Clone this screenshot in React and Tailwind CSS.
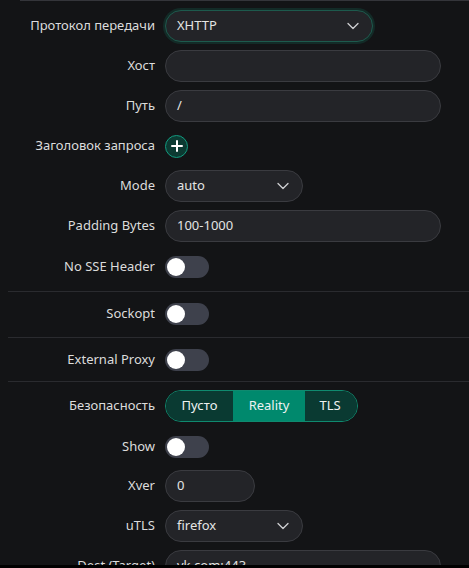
import React from "react";

// Transport / security settings form (dark theme)

const Chevron = () => (
  <svg width="12" height="8" viewBox="0 0 12 8" fill="none" className="shrink-0">
    <path d="M1 1.5 L6 6.5 L11 1.5" stroke="#cfd0d3" strokeWidth="1.3" strokeLinecap="round" strokeLinejoin="round" />
  </svg>
);

function Row({ label, className = "", children }) {
  return (
    <div className={`flex items-center h-8 ${className}`}>
      <div className="w-[155px] shrink-0 text-right text-[13px] text-[#dcdcdc] whitespace-nowrap">{label}</div>
      <div className="ml-[10px] flex items-center">{children}</div>
    </div>
  );
}

function Input({ value = "", width = "w-[276px]" }) {
  return (
    <div className={`${width} h-8 rounded-full border border-[#3a3b40] bg-[#232428] pl-[11px] flex items-center text-[13px] text-[#e4e4e4]`}>
      {value}
    </div>
  );
}

function Select({ value, width, focus }) {
  return (
    <div
      className={`${width} h-8 rounded-full border bg-[#232428] pl-[11px] pr-[13px] flex items-center justify-between text-[13px] text-[#e4e4e4] ${
        focus ? "border-[#1d5a4d] shadow-[0_0_0_2px_rgba(20,110,90,0.25)]" : "border-[#3a3b40]"
      }`}
    >
      <span>{value}</span>
      <Chevron />
    </div>
  );
}

function Switch() {
  return (
    <div className="w-[44px] h-[22px] rounded-full bg-[#3e414c] p-[2px] flex items-center">
      <div className="w-[18px] h-[18px] rounded-full bg-white" />
    </div>
  );
}

const Divider = ({ className = "" }) => <div className={`ml-2 h-px bg-[#2a2b2f] ${className}`} />;

export default function App() {
  return (
    <div className="w-[469px] h-[568px] bg-black" style={{ fontFamily: '"Noto Sans", "Open Sans", sans-serif' }}>
      <div className="h-[565px] overflow-hidden bg-[#131416]">
        <div className="ml-5 h-px bg-[#34353a]" />

        <Row label="Протокол передачи" className="mt-[9px]">
          <Select value="XHTTP" width="w-[208px]" focus />
        </Row>
        <Row label="Хост" className="mt-2">
          <Input />
        </Row>
        <Row label="Путь" className="mt-2">
          <Input value="/" />
        </Row>
        <Row label="Заголовок запроса" className="mt-2">
          <div className="w-[23px] h-[23px] rounded-full border border-[#139a7f] bg-[#0c3a32] flex items-center justify-center">
            <svg width="12" height="12" viewBox="0 0 12 12">
              <path d="M6 1 V11 M1 6 H11" stroke="#ffffff" strokeWidth="2" strokeLinecap="round" />
            </svg>
          </div>
        </Row>
        <Row label="Mode" className="mt-2">
          <Select value="auto" width="w-[138px]" />
        </Row>
        <Row label="Padding Bytes" className="mt-2">
          <Input value="100-1000" />
        </Row>
        <Row label="No SSE Header" className="mt-[9px]">
          <Switch />
        </Row>

        <Divider className="mt-2" />
        <Row label="Sockopt" className="mt-[6px]">
          <Switch />
        </Row>
        <Divider className="mt-[7px]" />
        <Row label="External Proxy" className="mt-[6px]">
          <Switch />
        </Row>
        <Divider className="mt-[5px]" />

        <Row label="Безопасность" className="mt-2">
          <div className="h-8 flex rounded-full border border-[#0f8a6f] overflow-hidden text-[13px] text-[#eef2f1]">
            <div className="w-[67px] bg-[#0a3a32] flex items-center justify-center">Пусто</div>
            <div className="w-[72px] bg-[#00896d] flex items-center justify-center">Reality</div>
            <div className="w-[52px] bg-[#0a3a32] flex items-center justify-center pr-[2px]">TLS</div>
          </div>
        </Row>
        <Row label="Show" className="mt-[9px]">
          <Switch />
        </Row>
        <Row label="Xver" className="mt-[7px]">
          <Input value="0" width="w-[90px]" />
        </Row>
        <Row label="uTLS" className="mt-2">
          <Select value="firefox" width="w-[138px]" />
        </Row>
        <Row label="Dest (Target)" className="mt-2">
          <Input value="vk.com:443" />
        </Row>
      </div>
    </div>
  );
}
